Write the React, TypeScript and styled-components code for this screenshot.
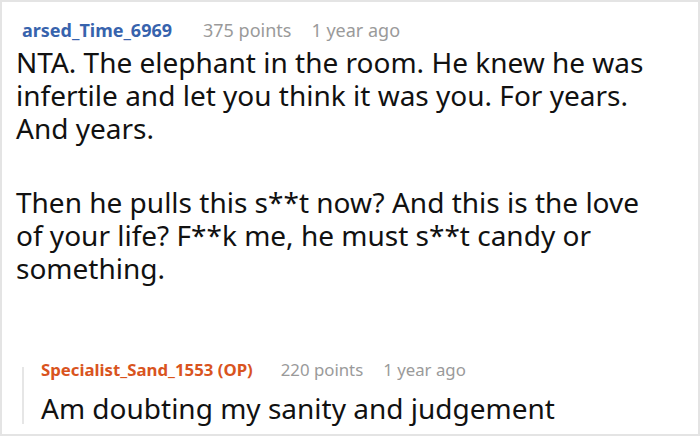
import * as React from 'react'
import styled, { createGlobalStyle } from 'styled-components'

const GlobalStyle = createGlobalStyle`
  html, body {
    margin: 0;
    padding: 0;
    background: #fff;
  }
  body {
    font-family: 'Noto Sans', 'Open Sans', sans-serif;
  }
`

type CommentProps = {
  author: string
  points: number
  age: string
  op?: boolean
  size: 'main' | 'reply'
  paragraphs: string[]
}

const Comment: React.FC<CommentProps> = ({ author, points, age, op, size, paragraphs }) => (
  <Stack>
    <Meta size={size}>
      <Author op={op}>{author}</Author>
      <Points size={size}>{points} points</Points>
      <Age>{age}</Age>
    </Meta>
    {paragraphs.map((p, i) => (
      <Body key={i} size={size}>
        {p}
      </Body>
    ))}
  </Stack>
)

export default function App() {
  return (
    <>
      <GlobalStyle />
      <Card>
        <Comment
          author="arsed_Time_6969"
          points={375}
          age="1 year ago"
          size="main"
          paragraphs={[
            'NTA. The elephant in the room. He knew he was\ninfertile and let you think it was you. For years.\nAnd years.',
            'Then he pulls this s**t now? And this is the love\nof your life? F**k me, he must s**t candy or\nsomething.',
          ]}
        />
        <Reply>
          <Rail />
          <Comment
            author="Specialist_Sand_1553 (OP)"
            points={220}
            age="1 year ago"
            op
            size="reply"
            paragraphs={['Am doubting my sanity and judgement']}
          />
        </Reply>
      </Card>
    </>
  )
}

type SizeProp = { size: 'main' | 'reply' }

const Card = styled.div`
  width: 700px;
  height: 436px;
  box-sizing: border-box;
  border: 2px solid #e4e4e4;
  padding: 16px 14px 0 14px;
  overflow: hidden;
`
const Stack = styled.div`
  display: flex;
  flex-direction: column;
`
const Meta = styled.div<SizeProp>`
  display: flex;
  align-items: baseline;
  font-size: ${({ size }) => (size === 'main' ? 18 : 16.8)}px;
  line-height: 24px;
  padding-left: ${({ size }) => (size === 'main' ? 6 : 0)}px;
`
const Author = styled.span<{ op?: boolean }>`
  font-weight: 700;
  color: ${({ op }) => (op ? '#d9541e' : '#3763ad')};
`
const Points = styled.span<SizeProp>`
  color: #9a9a9a;
  margin-left: ${({ size }) => (size === 'main' ? 31 : 28)}px;
`
const Age = styled.span`
  color: #9a9a9a;
  margin-left: 20px;
`
const Body = styled.p<SizeProp>`
  margin: ${({ size }) => (size === 'main' ? '4px 0 37px' : '8px 0 0')};
  font-size: 28px;
  line-height: ${({ size }) => (size === 'main' ? 33 : 36)}px;
  white-space: pre;
  color: #111;
`
const Reply = styled.div`
  display: flex;
  margin-top: 36px;
  margin-left: 6px;
`
const Rail = styled.div`
  width: 2px;
  background: #e6e6e6;
  margin: 9px 17px 2px 0;
  flex-shrink: 0;
`
